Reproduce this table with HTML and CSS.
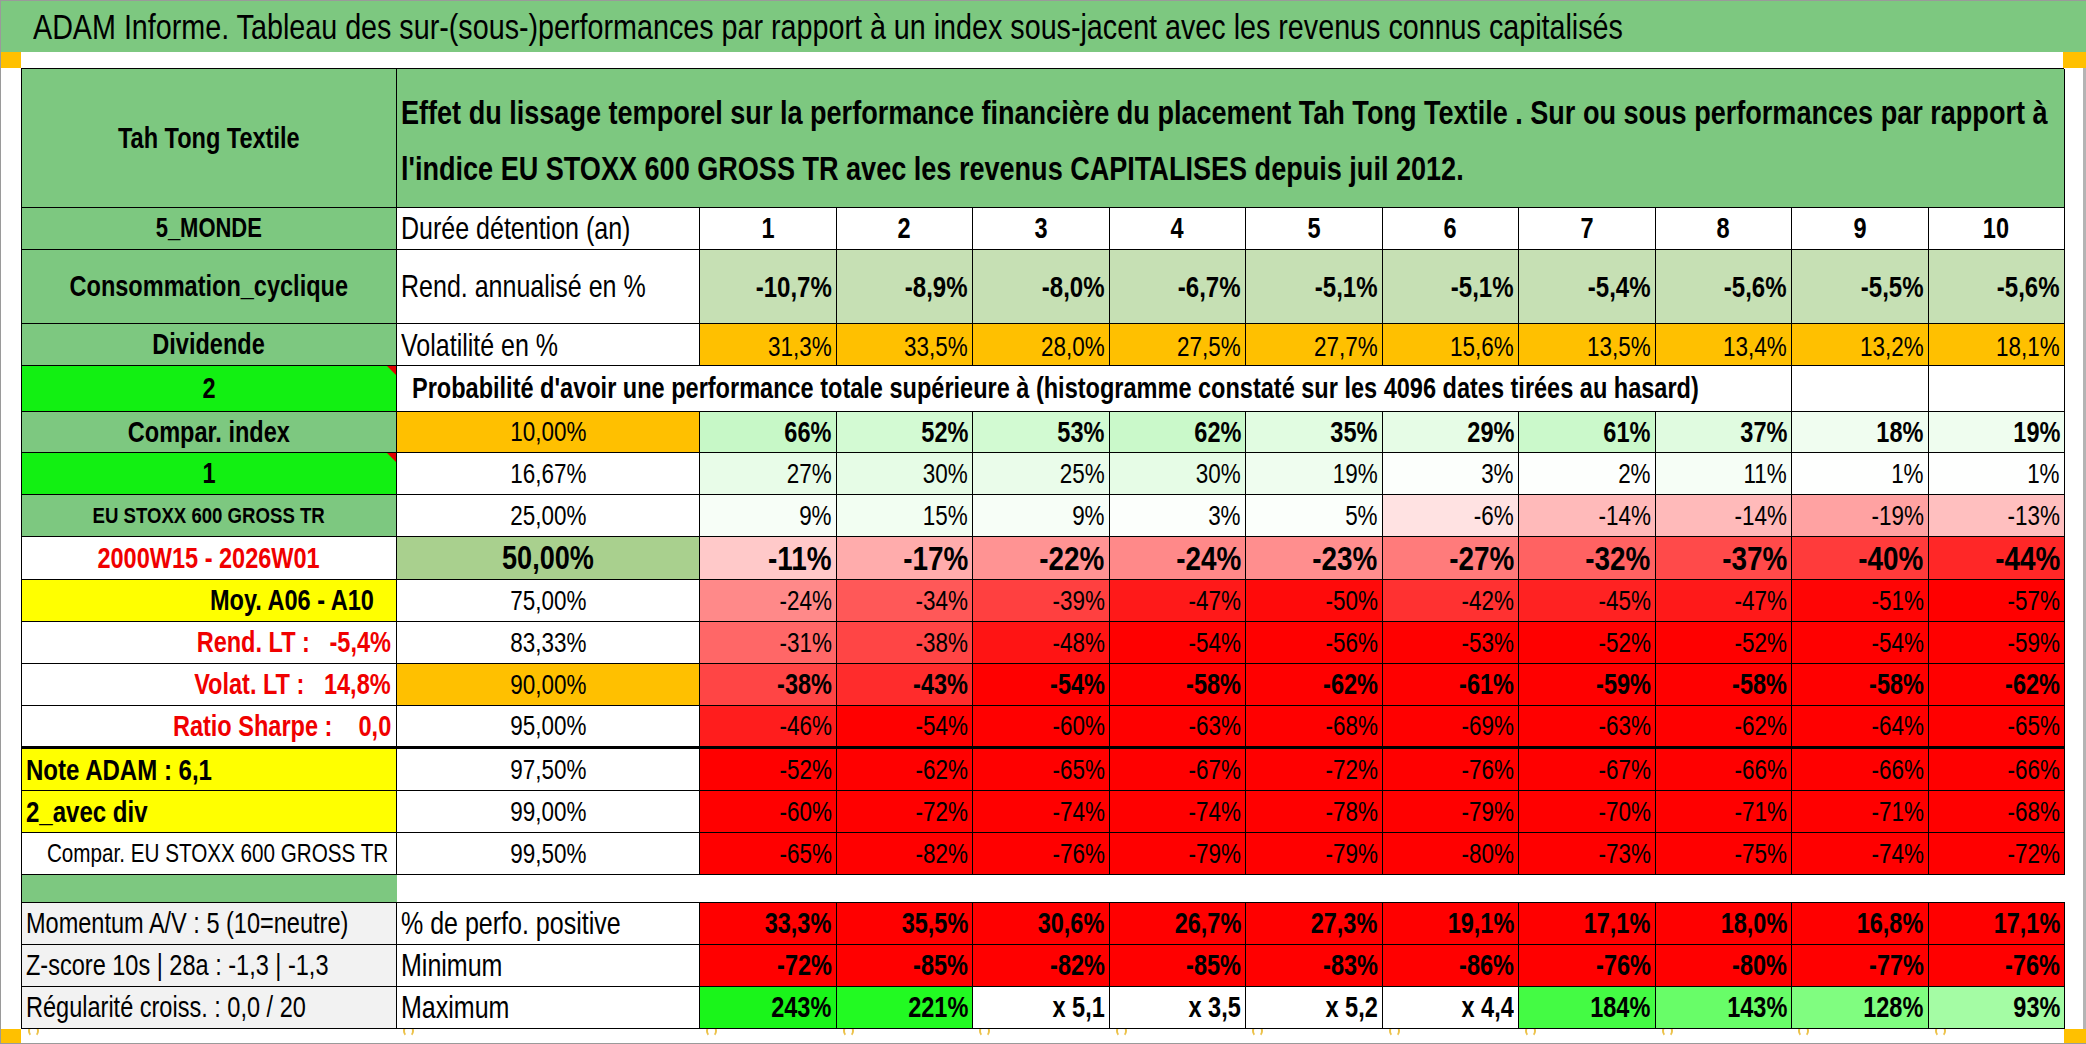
FILE: index.html
```html
<!DOCTYPE html>
<html lang="fr">
<head>
<meta charset="utf-8">
<title>ADAM Informe</title>
<link rel="stylesheet" href="styles.css">
</head>
<body>
<div class="page">
  <div class="titlebar"><span>ADAM Informe. Tableau des sur-(sous-)performances par rapport à un index sous-jacent avec les revenus connus capitalisés</span></div>
  <div class="strip top"><span class="handle hl"></span><span class="handle hr"></span></div>
  <div class="middle">
    <div class="gutter-l"></div>
    <div class="sheet">
      <!-- row 1 -->
      <div class="c g l1 big1"><span>Tah Tong Textile</span></div>
      <div class="c g hdr"><span>Effet du lissage temporel sur la performance financière du placement Tah Tong Textile . Sur ou sous performances par rapport à<br>l'indice EU STOXX 600 GROSS TR avec les revenus CAPITALISES depuis juil 2012.</span></div>
      <!-- row 2 -->
      <div class="c g l1 f22"><span>5_MONDE</span></div>
      <div class="c l2"><span>Durée détention (an)</span></div>
      <div class="c hn"><span>1</span></div><div class="c hn"><span>2</span></div><div class="c hn"><span>3</span></div><div class="c hn"><span>4</span></div><div class="c hn"><span>5</span></div>
      <div class="c hn"><span>6</span></div><div class="c hn"><span>7</span></div><div class="c hn"><span>8</span></div><div class="c hn"><span>9</span></div><div class="c hn"><span>10</span></div>
      <!-- row 3 -->
      <div class="c g l1"><span>Consommation_cyclique</span></div>
      <div class="c l2"><span>Rend. annualisé en %</span></div>
      <div class="c lg vb rend"><span>-10,7%</span></div><div class="c lg vb rend"><span>-8,9%</span></div><div class="c lg vb rend"><span>-8,0%</span></div><div class="c lg vb rend"><span>-6,7%</span></div><div class="c lg vb rend"><span>-5,1%</span></div>
      <div class="c lg vb rend"><span>-5,1%</span></div><div class="c lg vb rend"><span>-5,4%</span></div><div class="c lg vb rend"><span>-5,6%</span></div><div class="c lg vb rend"><span>-5,5%</span></div><div class="c lg vb rend"><span>-5,6%</span></div>
      <!-- row 4 -->
      <div class="c g l1"><span>Dividende</span></div>
      <div class="c l2 low"><span>Volatilité en %</span></div>
      <div class="c or v low"><span>31,3%</span></div><div class="c or v low"><span>33,5%</span></div><div class="c or v low"><span>28,0%</span></div><div class="c or v low"><span>27,5%</span></div><div class="c or v low"><span>27,7%</span></div>
      <div class="c or v low"><span>15,6%</span></div><div class="c or v low"><span>13,5%</span></div><div class="c or v low"><span>13,4%</span></div><div class="c or v low"><span>13,2%</span></div><div class="c or v low"><span>18,1%</span></div>
      <!-- row 5 -->
      <div class="c bg l1 cmt"><span>2</span></div>
      <div class="c prob"><span>Probabilité d'avoir une performance totale supérieure à (histogramme constaté sur les 4096 dates tirées au hasard)</span></div>
      <div class="c"></div><div class="c"></div>
      <!-- row 6 -->
      <div class="c g l1"><span>Compar. index</span></div>
      <div class="c or pc"><span>10,00%</span></div>
      <div class="c vb" style="background:#c7f8c7"><span>66%</span></div><div class="c vb" style="background:#d3fad3"><span>52%</span></div><div class="c vb" style="background:#d2fad2"><span>53%</span></div><div class="c vb" style="background:#caf9ca"><span>62%</span></div><div class="c vb" style="background:#e1fce1"><span>35%</span></div>
      <div class="c vb" style="background:#e6fce6"><span>29%</span></div><div class="c vb" style="background:#cbf9cb"><span>61%</span></div><div class="c vb" style="background:#e0fbe0"><span>37%</span></div><div class="c vb" style="background:#f0fdf0"><span>18%</span></div><div class="c vb" style="background:#effdef"><span>19%</span></div>
      <!-- row 7 -->
      <div class="c bg l1 cmt"><span>1</span></div>
      <div class="c pc"><span>16,67%</span></div>
      <div class="c v" style="background:#e8fce8"><span>27%</span></div><div class="c v" style="background:#e6fce6"><span>30%</span></div><div class="c v" style="background:#eafcea"><span>25%</span></div><div class="c v" style="background:#e6fce6"><span>30%</span></div><div class="c v" style="background:#effdef"><span>19%</span></div>
      <div class="c v" style="background:#fcfffc"><span>3%</span></div><div class="c v" style="background:#fdfffd"><span>2%</span></div><div class="c v" style="background:#f6fef6"><span>11%</span></div><div class="c v" style="background:#fefffe"><span>1%</span></div><div class="c v" style="background:#fefffe"><span>1%</span></div>
      <!-- row 8 -->
      <div class="c g l1 f19"><span>EU STOXX 600 GROSS TR</span></div>
      <div class="c pc"><span>25,00%</span></div>
      <div class="c v" style="background:#f7fef7"><span>9%</span></div><div class="c v" style="background:#f2fef2"><span>15%</span></div><div class="c v" style="background:#f7fef7"><span>9%</span></div><div class="c v" style="background:#fcfffc"><span>3%</span></div><div class="c v" style="background:#fbfffb"><span>5%</span></div>
      <div class="c v" style="background:#ffe2e2"><span>-6%</span></div><div class="c v" style="background:#ffbaba"><span>-14%</span></div><div class="c v" style="background:#ffbaba"><span>-14%</span></div><div class="c v" style="background:#ffa2a2"><span>-19%</span></div><div class="c v" style="background:#ffbfbf"><span>-13%</span></div>
      <!-- row 9 -->
      <div class="c l1 redt"><span>2000W15 - 2026W01</span></div>
      <div class="c mg pc big"><span>50,00%</span></div>
      <div class="c vbig" style="background:#ffc9c9"><span>-11%</span></div><div class="c vbig" style="background:#ffacac"><span>-17%</span></div><div class="c vbig" style="background:#ff9393"><span>-22%</span></div><div class="c vbig" style="background:#ff8989"><span>-24%</span></div><div class="c vbig" style="background:#ff8e8e"><span>-23%</span></div>
      <div class="c vbig" style="background:#ff7b7b"><span>-27%</span></div><div class="c vbig" style="background:#ff6262"><span>-32%</span></div><div class="c vbig" style="background:#ff4a4a"><span>-37%</span></div><div class="c vbig" style="background:#ff3b3b"><span>-40%</span></div><div class="c vbig" style="background:#ff2727"><span>-44%</span></div>
      <!-- row 10 -->
      <div class="c ye l1 right moy"><span>Moy. A06 - A10</span></div>
      <div class="c pc"><span>75,00%</span></div>
      <div class="c v" style="background:#ff8989"><span>-24%</span></div><div class="c v" style="background:#ff5858"><span>-34%</span></div><div class="c v" style="background:#ff4040"><span>-39%</span></div><div class="c v" style="background:#ff1919"><span>-47%</span></div><div class="c v" style="background:#ff0a0a"><span>-50%</span></div>
      <div class="c v" style="background:#ff3131"><span>-42%</span></div><div class="c v" style="background:#ff2222"><span>-45%</span></div><div class="c v" style="background:#ff1919"><span>-47%</span></div><div class="c v" style="background:#ff0505"><span>-51%</span></div><div class="c v rd"><span>-57%</span></div>
      <!-- row 11 -->
      <div class="c l1 right redt pre"><span>Rend. LT :   -5,4%</span></div>
      <div class="c pc"><span>83,33%</span></div>
      <div class="c v" style="background:#ff6767"><span>-31%</span></div><div class="c v" style="background:#ff4545"><span>-38%</span></div><div class="c v" style="background:#ff1414"><span>-48%</span></div><div class="c v rd"><span>-54%</span></div><div class="c v rd"><span>-56%</span></div>
      <div class="c v rd"><span>-53%</span></div><div class="c v rd"><span>-52%</span></div><div class="c v rd"><span>-52%</span></div><div class="c v rd"><span>-54%</span></div><div class="c v rd"><span>-59%</span></div>
      <!-- row 12 -->
      <div class="c l1 right redt pre"><span>Volat. LT :   14,8%</span></div>
      <div class="c or pc"><span>90,00%</span></div>
      <div class="c vb" style="background:#ff4545"><span>-38%</span></div><div class="c vb" style="background:#ff2c2c"><span>-43%</span></div><div class="c vb rd"><span>-54%</span></div><div class="c vb rd"><span>-58%</span></div><div class="c vb rd"><span>-62%</span></div>
      <div class="c vb rd"><span>-61%</span></div><div class="c vb rd"><span>-59%</span></div><div class="c vb rd"><span>-58%</span></div><div class="c vb rd"><span>-58%</span></div><div class="c vb rd"><span>-62%</span></div>
      <!-- row 13 -->
      <div class="c l1 right redt pre thick"><span>Ratio Sharpe :    0,0</span></div>
      <div class="c pc thick"><span>95,00%</span></div>
      <div class="c v thick" style="background:#ff1d1d"><span>-46%</span></div><div class="c v rd thick"><span>-54%</span></div><div class="c v rd thick"><span>-60%</span></div><div class="c v rd thick"><span>-63%</span></div><div class="c v rd thick"><span>-68%</span></div>
      <div class="c v rd thick"><span>-69%</span></div><div class="c v rd thick"><span>-63%</span></div><div class="c v rd thick"><span>-62%</span></div><div class="c v rd thick"><span>-64%</span></div><div class="c v rd thick"><span>-65%</span></div>
      <!-- row 14 -->
      <div class="c ye l1 left"><span>Note ADAM : 6,1</span></div>
      <div class="c pc"><span>97,50%</span></div>
      <div class="c v rd"><span>-52%</span></div><div class="c v rd"><span>-62%</span></div><div class="c v rd"><span>-65%</span></div><div class="c v rd"><span>-67%</span></div><div class="c v rd"><span>-72%</span></div>
      <div class="c v rd"><span>-76%</span></div><div class="c v rd"><span>-67%</span></div><div class="c v rd"><span>-66%</span></div><div class="c v rd"><span>-66%</span></div><div class="c v rd"><span>-66%</span></div>
      <!-- row 15 -->
      <div class="c ye l1 left"><span>2_avec div</span></div>
      <div class="c pc"><span>99,00%</span></div>
      <div class="c v rd"><span>-60%</span></div><div class="c v rd"><span>-72%</span></div><div class="c v rd"><span>-74%</span></div><div class="c v rd"><span>-74%</span></div><div class="c v rd"><span>-78%</span></div>
      <div class="c v rd"><span>-79%</span></div><div class="c v rd"><span>-70%</span></div><div class="c v rd"><span>-71%</span></div><div class="c v rd"><span>-71%</span></div><div class="c v rd"><span>-68%</span></div>
      <!-- row 16 -->
      <div class="c cmpeu"><span>Compar. EU STOXX 600 GROSS TR</span></div>
      <div class="c pc"><span>99,50%</span></div>
      <div class="c v rd"><span>-65%</span></div><div class="c v rd"><span>-82%</span></div><div class="c v rd"><span>-76%</span></div><div class="c v rd"><span>-79%</span></div><div class="c v rd"><span>-79%</span></div>
      <div class="c v rd"><span>-80%</span></div><div class="c v rd"><span>-73%</span></div><div class="c v rd"><span>-75%</span></div><div class="c v rd"><span>-74%</span></div><div class="c v rd"><span>-72%</span></div>
      <!-- row 17 spacer -->
      <div class="c g gap1"></div>
      <div class="c gapw"></div>
      <!-- row 18 -->
      <div class="c gy l3"><span>Momentum A/V : 5 (10=neutre)</span></div>
      <div class="c l2"><span>% de perfo. positive</span></div>
      <div class="c vb rd"><span>33,3%</span></div><div class="c vb rd"><span>35,5%</span></div><div class="c vb rd"><span>30,6%</span></div><div class="c vb rd"><span>26,7%</span></div><div class="c vb rd"><span>27,3%</span></div>
      <div class="c vb rd"><span>19,1%</span></div><div class="c vb rd"><span>17,1%</span></div><div class="c vb rd"><span>18,0%</span></div><div class="c vb rd"><span>16,8%</span></div><div class="c vb rd"><span>17,1%</span></div>
      <!-- row 19 -->
      <div class="c gy l3"><span>Z-score 10s | 28a : -1,3 | -1,3</span></div>
      <div class="c l2"><span>Minimum</span></div>
      <div class="c vb rd"><span>-72%</span></div><div class="c vb rd"><span>-85%</span></div><div class="c vb rd"><span>-82%</span></div><div class="c vb rd"><span>-85%</span></div><div class="c vb rd"><span>-83%</span></div>
      <div class="c vb rd"><span>-86%</span></div><div class="c vb rd"><span>-76%</span></div><div class="c vb rd"><span>-80%</span></div><div class="c vb rd"><span>-77%</span></div><div class="c vb rd"><span>-76%</span></div>
      <!-- row 20 -->
      <div class="c gy l3"><span>Régularité croiss. : 0,0 / 20</span></div>
      <div class="c l2"><span>Maximum</span></div>
      <div class="c vb" style="background:#1af51a"><span>243%</span></div><div class="c vb" style="background:#22fa22"><span>221%</span></div><div class="c vb"><span>x 5,1</span></div><div class="c vb"><span>x 3,5</span></div><div class="c vb"><span>x 5,2</span></div>
      <div class="c vb"><span>x 4,4</span></div><div class="c vb" style="background:#44fb44"><span>184%</span></div><div class="c vb" style="background:#68fd68"><span>143%</span></div><div class="c vb" style="background:#80fd80"><span>128%</span></div><div class="c vb" style="background:#a4fca4"><span>93%</span></div>
    </div>
    <div class="gutter-r"></div>
  </div>
  <div class="strip bottom">
    <span class="handle hl"></span>
    <div class="marks">
      <span class="mk"><i></i></span><span class="mk"><i></i></span><span class="mk"><i></i></span><span class="mk"><i></i></span>
      <span class="mk"><i></i></span><span class="mk"><i></i></span><span class="mk"><i></i></span><span class="mk"><i></i></span>
      <span class="mk"><i></i></span><span class="mk"><i></i></span><span class="mk"><i></i></span><span class="mk"><i></i></span>
    </div>
    <span class="handle hr"></span>
  </div>
</div>
</body>
</html>
```

FILE: styles.css
```css
* { box-sizing: border-box; }

html, body { overflow: hidden; }

body {
  margin: 0;
  background: #ffffff;
  font-family: "Liberation Sans", Arial, sans-serif;
  color: #000000;
}

.page {
  width: 2086px;
  border-left: 1px solid #9a9a9a;
  border-top: 1px solid #9a9a9a;
  border-bottom: 2px solid #9a9a9a;
  background: #ffffff;
}

/* Calibri-like narrow text: glyphs are condensed horizontally */
.titlebar > span,
.c > span {
  display: inline-block;
  transform: scaleX(0.82);
  transform-origin: center center;
}

.titlebar {
  height: 51px;
  background: #7dc880;
  font-size: 35px;
  display: flex;
  align-items: center;
  padding-left: 32px;
  white-space: nowrap;
  overflow: hidden;
}
.titlebar > span { transform-origin: left center; }

.strip { display: flex; justify-content: space-between; }
.strip.top { height: 16px; }
.strip.bottom { height: 14px; }
.handle { background: #ffc000; flex: none; }
.hl { width: 20px; }
.hr { width: 23px; }

.middle { display: flex; }
.gutter-l { width: 20px; flex: none; }
.gutter-r { width: 22px; flex: none; border-right: 3px solid #b4b4b4; }

.sheet {
  width: 2043px;
  flex: none;
  display: grid;
  grid-template-columns: 375px 303px repeat(10, 136.5px);
  grid-template-rows: 139px 42px 74px 42px 46px 41px 42px 42px 43px 42px 42px 42px 43px 42px 42px 42px 28px 42px 42px 42px;
  border-top: 1px solid #000;
  border-left: 1px solid #000;
}

.c {
  border-right: 1px solid #000;
  border-bottom: 1px solid #000;
  display: flex;
  align-items: center;
  padding: 0 4px;
  white-space: nowrap;
  overflow: hidden;
  font-size: 27.4px;
  position: relative;
}

/* fills */
.g { background: #7dc880; }
.lg { background: #c6e0b4; }
.or { background: #ffc000; }
.bg { background: #12f012; }
.ye { background: #ffff00; }
.mg { background: #a9d08e; }
.rd { background: #ff0000; }
.gy { background: #f2f2f2; }

/* header */
.big1 { font-size: 33px; }
.hdr {
  grid-column: 2 / 13;
  font-weight: 700;
  font-size: 33px;
  line-height: 56px;
  padding-left: 4px;
  padding-top: 6px;
}
.hdr > span { transform-origin: left center; }

/* column 1 labels */
.l1 { font-weight: 700; font-size: 28.7px; justify-content: center; }
.l1.right { justify-content: flex-end; padding-right: 5px; }
.l1.right > span { transform-origin: right center; }
.l1.left { justify-content: flex-start; padding-left: 4px; font-size: 29.3px; }
.l1.left > span { transform-origin: left center; }
.l1.moy { padding-right: 22px; }
.f22 { font-size: 26.8px; }
.f19 { font-size: 22.7px; }
.redt { color: #f00000; }
.pre { white-space: pre; }
.cmpeu { justify-content: flex-end; padding-right: 8px; font-size: 25.2px; }
.cmpeu > span { transform-origin: right center; }
.l3 { font-size: 28.7px; padding-left: 4px; }
.l3 > span { transform-origin: left center; }

/* comment indicator */
.cmt::after {
  content: "";
  position: absolute;
  top: 0;
  right: 0;
  border-left: 9px solid transparent;
  border-top: 9px solid #e00000;
}

/* column 2 */
.l2 { font-size: 30.5px; padding-left: 4px; }
.l2 > span { transform-origin: left center; }
.pc { justify-content: center; font-size: 27.4px; }
.pc.big { font-size: 33px; font-weight: 700; }
.prob {
  grid-column: 2 / 11;
  font-weight: 700;
  font-size: 28.7px;
  padding-left: 15px;
}
.prob > span { transform-origin: left center; }

/* values */
.hn { justify-content: center; font-weight: 700; font-size: 28.7px; }
.v { justify-content: flex-end; font-size: 27.4px; }
.vb { justify-content: flex-end; font-weight: 700; font-size: 28.7px; }
.vbig { justify-content: flex-end; font-weight: 700; font-size: 34px; }
.v > span, .vb > span, .vbig > span { transform-origin: right center; }
.rend { font-size: 29.3px; }
.low { align-items: flex-end; padding-bottom: 2px; }
.thick { border-bottom-width: 3px; }

/* spacer row */
.gap1 { border-right: none; }
.gapw { grid-column: 2 / 13; border-right: none; }

/* small markers below the sheet */
.marks {
  flex: 1;
  display: grid;
  grid-template-columns: 375px 303px repeat(10, 136.5px);
}
.mk { padding-left: 7px; overflow: hidden; }
.mk i {
  display: block;
  width: 11px;
  height: 12px;
  margin-top: -4px;
  border: 2px solid #ecc24a;
  border-top-color: transparent;
  border-bottom-color: transparent;
  border-radius: 50%;
}
```
